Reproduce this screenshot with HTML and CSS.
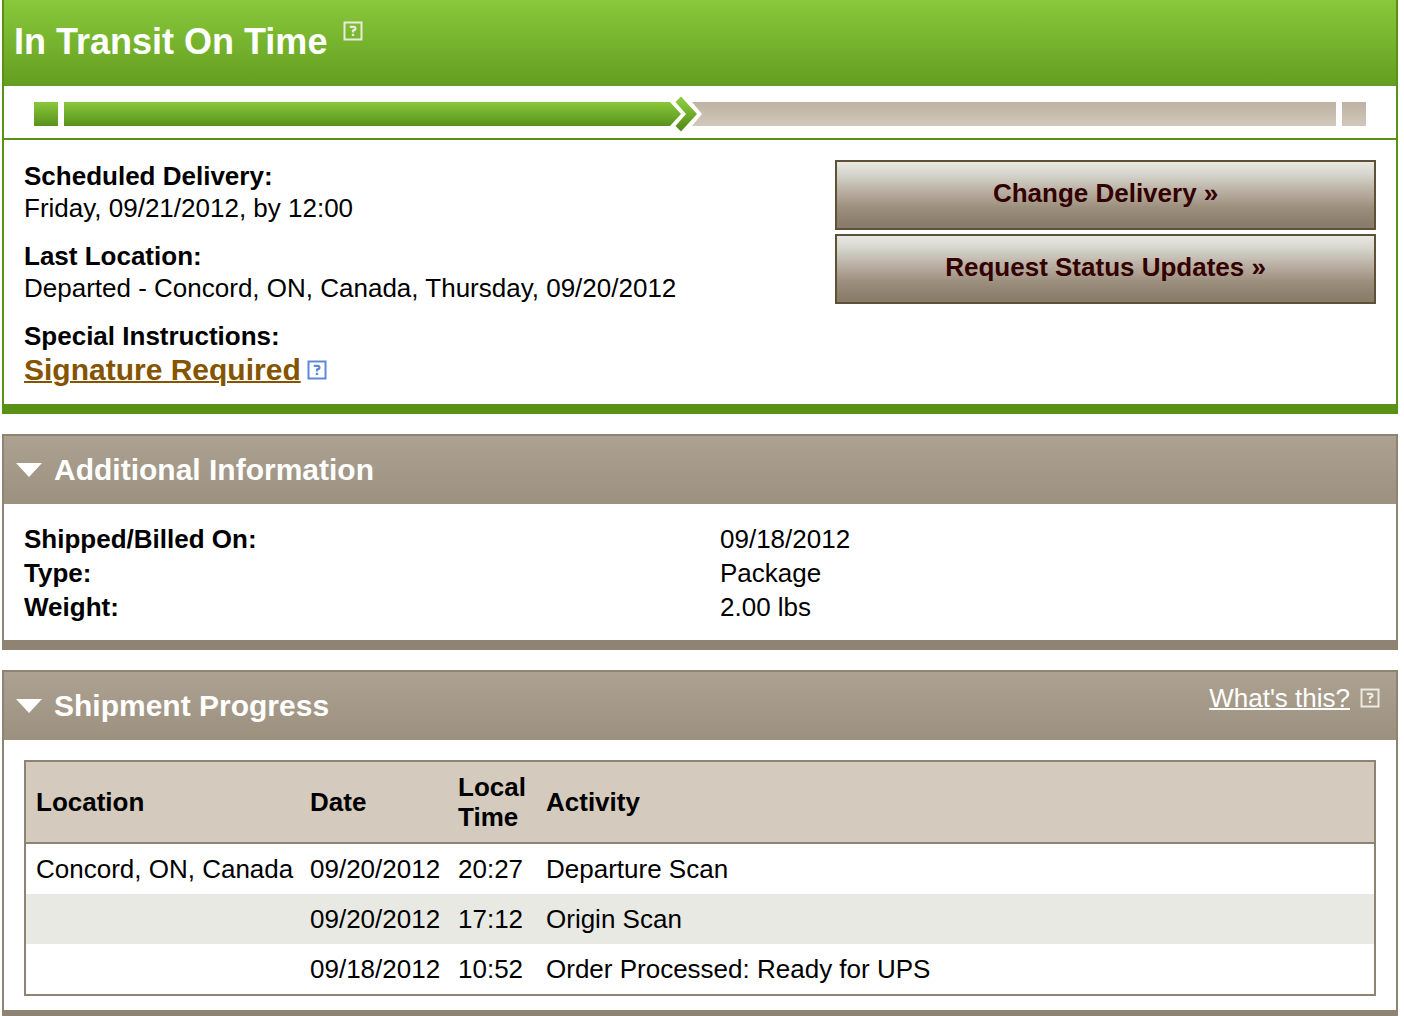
FILE: index.html
```html
<!DOCTYPE html>
<html lang="en">
<head>
    <meta charset="UTF-8">
    <meta name="viewport" content="width=device-width, initial-scale=1.0">
    <title>Tracking Detail</title>
    <link rel="stylesheet" href="styles.css">
</head>
<body>
    <!-- help icon, reused in each panel -->
    <svg class="defs" width="0" height="0" aria-hidden="true">
        <symbol id="help" viewBox="0 0 20 20">
            <rect x="1.5" y="1.5" width="17" height="17" fill="none" stroke="currentColor" stroke-width="2"/>
            <path d="M6.8 5.9H10.6C13 5.9 13 9 10.8 9.2L10 9.6V11.6" fill="none" stroke="currentColor" stroke-width="2.2"/>
            <rect x="8.8" y="12.8" width="2.4" height="2.2" fill="currentColor"/>
        </symbol>
    </svg>
    <section class="panel status">
        <header class="status-head">
            <h1>In Transit On Time</h1>
            <a href="#" class="help" aria-label="Help"><svg width="20" height="20"><use href="#help"/></svg></a>
        </header>
        <div class="progress">
            <span class="stop done"></span>
            <div class="track">
                <span class="done" style="width:47.5%"></span>
                <svg class="arrow" width="36" height="36" viewBox="0 0 36 36" aria-hidden="true">
                    <defs>
                        <linearGradient id="green" x1="0" y1="6" x2="0" y2="30" gradientUnits="userSpaceOnUse">
                            <stop offset="0" stop-color="#88c83c"/>
                            <stop offset="1" stop-color="#58921a"/>
                        </linearGradient>
                        <linearGradient id="tan" x1="0" y1="6" x2="0" y2="30" gradientUnits="userSpaceOnUse">
                            <stop offset="0" stop-color="#bdb2a3"/>
                            <stop offset="1" stop-color="#d1c8bb"/>
                        </linearGradient>
                    </defs>
                    <path d="M0 6H2L13 18L2 30H0Z" fill="url(#green)"/>
                    <path d="M13 0.5L29 18L13 35.5L7.5 30L18 18L7.5 6Z" fill="url(#green)"/>
                    <path d="M24 6H36V30H24L34 18Z" fill="url(#tan)"/>
                </svg>
                <span class="todo rest"></span>
            </div>
            <span class="stop todo"></span>
        </div>
        <div class="status-body">
            <dl class="facts">
                <dt>Scheduled Delivery:</dt>
                <dd>Friday, 09/21/2012, by 12:00</dd>
                <dt>Last Location:</dt>
                <dd>Departed - Concord, ON, Canada, Thursday, 09/20/2012</dd>
                <dt>Special Instructions:</dt>
                <dd class="signature">
                    <a href="#">Signature Required</a>
                    <a href="#" class="help" aria-label="Help"><svg width="20" height="20"><use href="#help"/></svg></a>
                </dd>
            </dl>
            <div class="actions">
                <button type="button">Change Delivery »</button>
                <button type="button">Request Status Updates »</button>
            </div>
        </div>
    </section>

    <section class="panel">
        <header class="panel-head">
            <h2><button type="button" aria-expanded="true"><svg width="26" height="14" viewBox="0 0 26 14" aria-hidden="true"><path d="M0 0H26L13 14Z" fill="#fff"/></svg>Additional Information</button></h2>
        </header>
        <dl class="details">
            <dt>Shipped/Billed On:</dt>
            <dd>09/18/2012</dd>
            <dt>Type:</dt>
            <dd>Package</dd>
            <dt>Weight:</dt>
            <dd>2.00 lbs</dd>
        </dl>
    </section>

    <section class="panel last">
        <header class="panel-head">
            <h2><button type="button" aria-expanded="true"><svg width="26" height="14" viewBox="0 0 26 14" aria-hidden="true"><path d="M0 0H26L13 14Z" fill="#fff"/></svg>Shipment Progress</button></h2>
            <div class="whats-this">
                <a href="#">What's this?</a>
                <a href="#" class="help" aria-label="Help"><svg width="20" height="20"><use href="#help"/></svg></a>
            </div>
        </header>
        <div class="scans">
            <table>
                <colgroup>
                    <col class="col-location">
                    <col class="col-date">
                    <col class="col-time">
                    <col>
                </colgroup>
                <thead>
                    <tr>
                        <th>Location</th>
                        <th>Date</th>
                        <th>Local Time</th>
                        <th>Activity</th>
                    </tr>
                </thead>
                <tbody>
                    <tr>
                        <td>Concord, ON, Canada</td>
                        <td>09/20/2012</td>
                        <td>20:27</td>
                        <td>Departure Scan</td>
                    </tr>
                    <tr>
                        <td></td>
                        <td>09/20/2012</td>
                        <td>17:12</td>
                        <td>Origin Scan</td>
                    </tr>
                    <tr>
                        <td></td>
                        <td>09/18/2012</td>
                        <td>10:52</td>
                        <td>Order Processed: Ready for UPS</td>
                    </tr>
                </tbody>
            </table>
        </div>
    </section>
</body>
</html>
```
FILE: styles.css
```css
*{
    box-sizing: border-box;
}
body{
    margin: 0 6px 0 2px;
    background-color: white;
    color: black;
    font-family: "Liberation Sans", Arial, sans-serif;
    font-size: 26px;
    line-height: 32px;
}
h1, h2, dl, dd{
    margin: 0;
}
dt{
    font-weight: bold;
}
svg{
    display: block;
}
.defs{
    position: absolute;
}
.help{
    color: #eceae0;
}
.panel{
    margin-bottom: 20px;
    border: 2px solid #8f8373;
    border-bottom-width: 10px;
}
.last{
    margin-bottom: 0;
    border-bottom-width: 6px;
}
.panel-head{
    display: flex;
    justify-content: space-between;
    height: 68px;
    padding: 0 16px 0 12px;
    background: linear-gradient(#ada291, #9c907f);
}
h2 button{
    display: flex;
    align-items: center;
    gap: 12px;
    height: 68px;
    padding: 0;
    border: 0;
    background: none;
    color: white;
    font: bold 30px "Liberation Sans", Arial, sans-serif;
}

/* status */
.status{
    border-color: #5a9216;
    border-top: 0;
}
.status-head{
    display: flex;
    gap: 16px;
    height: 86px;
    padding: 21px 10px;
    background: linear-gradient(#89c93b, #639e20);
}
.status-head h1{
    color: white;
    font-size: 36px;
    line-height: 42px;
}
.progress{
    display: flex;
    align-items: center;
    gap: 6px;
    height: 54px;
    padding: 4px 30px 0;
    border-bottom: 2px solid #5a9216;
}
.stop{
    width: 24px;
}
.done, .todo{
    height: 24px;
}
.done{
    background: linear-gradient(#88c83c, #58921a);
}
.todo{
    background: linear-gradient(#bdb2a3, #d1c8bb);
}
.track{
    display: flex;
    align-items: center;
    flex: 1;
}
.arrow{
    flex: none;
}
.rest{
    flex: 1;
}
.status-body{
    display: flex;
    justify-content: space-between;
    padding: 20px 20px 16px;
}
.facts dt{
    margin-top: 16px;
}
.facts dt:first-child{
    margin-top: 0;
}
.signature{
    display: flex;
    align-items: center;
    gap: 6px;
    height: 36px;
    color: #855400;
    font-size: 30px;
    font-weight: bold;
}
.signature a{
    color: inherit;
    text-decoration-thickness: 2px;
}
.signature .help{
    color: #6088d8;
}
.actions{
    display: flex;
    flex-direction: column;
    gap: 4px;
    width: 40%;
}
.actions button{
    height: 70px;
    padding: 0 0 4px;
    border: 2px solid #5f5038;
    background: linear-gradient(#e9e9e3, #d4d4cb 20%, #c1b8ad 38%, #9d907f 68%, #8d7f6d 90%, #8a7c6a);
    color: #330000;
    font: bold 26px "Liberation Sans", Arial, sans-serif;
}

/* additional information */
.details{
    display: grid;
    grid-template-columns: 1fr 1fr;
    column-gap: 40px;
    padding: 18px 20px 16px;
    line-height: 34px;
}

/* shipment progress */
.whats-this{
    display: flex;
    align-items: center;
    gap: 10px;
    height: 52px;
}
.whats-this a{
    color: white;
    text-decoration-thickness: 2px;
}
.whats-this .help{
    color: #eceae0;
}
.scans{
    padding: 20px 20px 14px;
}
table{
    width: 100%;
    table-layout: fixed;
    border: 2px solid #8f8373;
    border-spacing: 0;
}
.col-location{
    width: 274px;
}
.col-date{
    width: 148px;
}
.col-time{
    width: 88px;
}
th, td{
    height: 50px;
    padding: 0 0 0 10px;
    text-align: left;
    white-space: nowrap;
}
th{
    height: 82px;
    border-bottom: 2px solid #8f8373;
    background-color: #d4cbbe;
    line-height: 30px;
    white-space: normal;
}
tbody tr:nth-child(even){
    background-color: #e9e9e3;
}
```
